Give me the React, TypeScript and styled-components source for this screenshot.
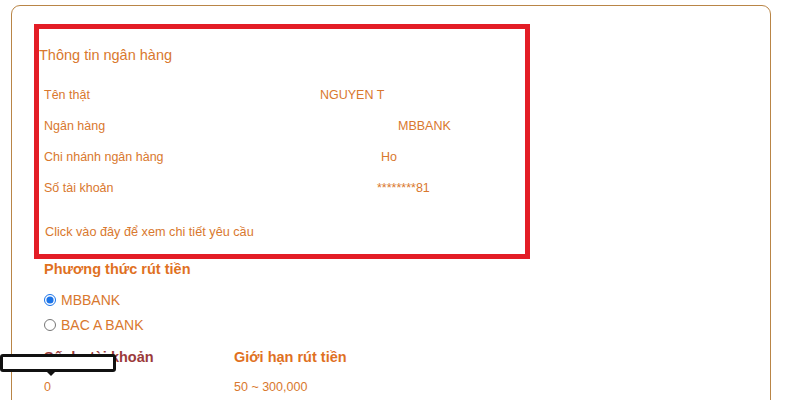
import styled, { createGlobalStyle } from "styled-components";

const GlobalStyle = createGlobalStyle`
  body {
    margin: 0;
    background: #ffffff;
    font-family: "Liberation Sans", Arial, sans-serif;
  }
`;

interface InfoRow {
  label: string;
  value: string;
  offset: number;
}

const bankRows: InfoRow[] = [
  { label: "Tên thật", value: "NGUYEN T", offset: 276 },
  { label: "Ngân hàng", value: "MBBANK", offset: 354 },
  { label: "Chi nhánh ngân hàng", value: "Ho", offset: 337 },
  { label: "Số tài khoản", value: "********81", offset: 333 },
];

const methods = ["MBBANK", "BAC A BANK"];

export default function App() {
  return (
    <Page>
      <GlobalStyle />
      <Card>
        <BankBox>
          <BoxTitle>Thông tin ngân hàng</BoxTitle>
          {bankRows.map((row) => (
            <Row key={row.label}>
              <Label>{row.label}</Label>
              <Value offset={row.offset}>{row.value}</Value>
            </Row>
          ))}
          <DetailLink>Click vào đây để xem chi tiết yêu cầu</DetailLink>
        </BankBox>
        <Section>
          <Heading>Phương thức rút tiền</Heading>
          <RadioList>
            {methods.map((m, i) => (
              <RadioRow key={m}>
                <Radio type="radio" name="method" defaultChecked={i === 0} />
                {m}
              </RadioRow>
            ))}
          </RadioList>
          <Stats>
            <Stat>
              <Heading tone="#9b3a3a">Số dư tài khoản</Heading>
              <StatValue>0</StatValue>
            </Stat>
            <Stat>
              <Heading>Giới hạn rút tiền</Heading>
              <StatValue>50 ~ 300,000</StatValue>
            </Stat>
          </Stats>
        </Section>
      </Card>
      <Tooltip />
    </Page>
  );
}

const Page = styled.div`
  position: relative;
  width: 800px;
  height: 400px;
  overflow: hidden;
  padding-top: 5px;
  box-sizing: border-box;
`;

const Card = styled.div`
  margin-left: 11px;
  width: 760px;
  height: 420px;
  border: 1px solid #b98546;
  border-radius: 9px;
  box-sizing: border-box;
  padding: 18px 0 0 22px;
  color: #d9782e;
`;

const BankBox = styled.div`
  width: 496px;
  box-sizing: border-box;
  border: 5px solid #e31d26;
  padding: 16px 0 13px 0;
`;

const BoxTitle = styled.div`
  font-size: 14.5px;
  line-height: 20px;
  margin-bottom: 14px;
`;

const Row = styled.div`
  display: flex;
  align-items: center;
  height: 31px;
  font-size: 12.5px;
`;

const Label = styled.span`
  width: 0;
  white-space: nowrap;
  padding-left: 5px;
`;

const Value = styled.span<{ offset: number }>`
  padding-left: ${(p) => p.offset}px;
  white-space: nowrap;
`;

const DetailLink = styled.div`
  margin-top: 20px;
  padding-left: 6px;
  font-size: 12.7px;
  line-height: 18px;
  cursor: pointer;
`;

const Section = styled.div`
  padding-left: 10px;
`;

const Heading = styled.div<{ tone?: string }>`
  font-size: 14.5px;
  font-weight: bold;
  line-height: 20px;
  color: ${(p) => p.tone ?? "#e0711f"};
`;

const RadioList = styled.div`
  margin-top: 8px;
`;

const RadioRow = styled.label`
  display: flex;
  align-items: center;
  height: 25px;
  font-size: 14px;
`;

const Radio = styled.input`
  width: 12px;
  height: 12px;
  margin: 0 5px 0 0;
  accent-color: #1a73e8;
`;

const Stats = styled.div`
  display: grid;
  grid-template-columns: 190px 200px;
  margin-top: 10px;
`;

const Stat = styled.div`
  display: flex;
  flex-direction: column;
`;

const StatValue = styled.div`
  margin-top: 11px;
  font-size: 12.5px;
  line-height: 18px;
`;

const Tooltip = styled.div`
  position: absolute;
  left: 0;
  top: 354px;
  width: 116px;
  height: 18px;
  box-sizing: border-box;
  border: 3px solid #111;
  border-radius: 3px;
  background: #fff;
  &::after {
    content: "";
    position: absolute;
    left: 43px;
    bottom: -7px;
    border-left: 5px solid transparent;
    border-right: 5px solid transparent;
    border-top: 5px solid #111;
  }
`;
